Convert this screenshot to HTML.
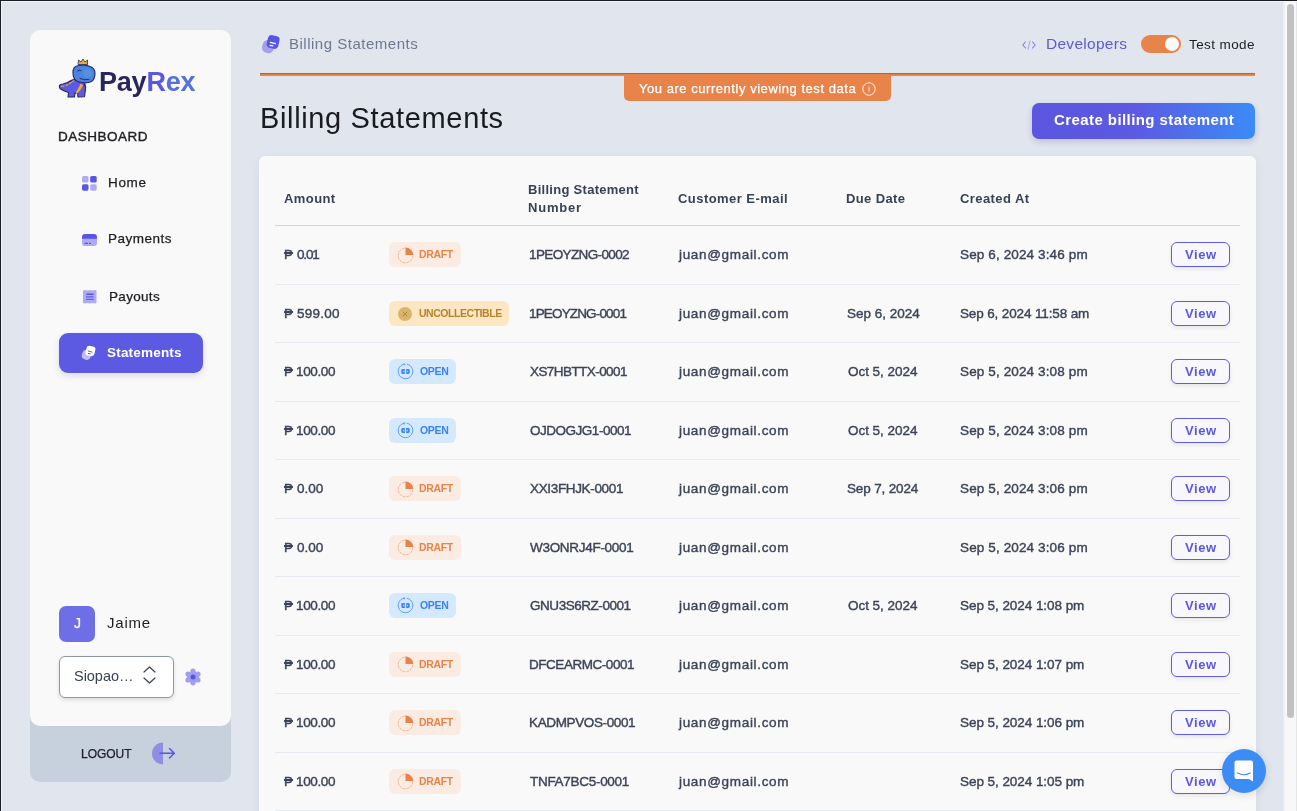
<!DOCTYPE html><html><head><meta charset="utf-8"><style>
*{box-sizing:border-box;margin:0;padding:0}
html,body{width:1297px;height:811px;overflow:hidden;background:#e1e5ee;font-family:'Liberation Sans',sans-serif}
.t{position:absolute;white-space:nowrap;line-height:1;will-change:transform}
.a{position:absolute}
.badge{position:absolute;height:25px;border-radius:6px}
.viewbtn{position:absolute;left:1171px;width:59px;height:25px;border:1px solid #5e5be4;border-radius:6px;background:#f8f8fc;box-shadow:0 2px 4px rgba(0,0,0,.08)}
.rowline{position:absolute;left:275px;width:965px;height:1px;background:#e6e9ef}
</style></head><body>
<div class="a" style="left:0;top:0;width:1297px;height:1px;background:#1b1e25"></div>
<div class="a" style="left:0;top:0;width:1px;height:811px;background:#1b1e25"></div>
<div class="a" style="left:1px;top:1px;width:1296px;height:1px;background:#eef2fa"></div>
<div class="a" style="left:1px;top:1px;width:1px;height:810px;background:#eef2fa"></div>
<div class="a" style="left:1283px;top:2px;width:14px;height:809px;background:linear-gradient(90deg,#e9e9e9 0,#f5f5f5 2px,#f8f8f8 3px,#f8f8f8 13px,#e6e6e6 13px)"></div>
<div class="a" style="left:1287px;top:4px;width:7px;height:714px;background:#c1c1c1;border-radius:4px"></div>
<div class="a" style="left:30px;top:700px;width:201px;height:82px;background:#c7d0dd;border-radius:10px"></div>
<div class="a" style="left:30px;top:30px;width:201px;height:696px;background:#f9f9f9;border-radius:10px"></div>
<div class="a" style="left:58.5px;top:333px;width:144px;height:40px;background:#5c59e2;border-radius:9px;box-shadow:0 3px 6px rgba(60,60,120,.15)"></div>
<div class="a" style="left:59px;top:606px;width:36px;height:36px;background:#6e6ee6;border-radius:7px"></div>
<div class="a" style="left:59px;top:656px;width:115px;height:42px;background:#fff;border:1px solid #8d97a8;border-radius:6px;box-shadow:0 2px 4px rgba(0,0,0,.12)"></div>
<div class="a" style="left:260px;top:73px;width:995px;height:1px;background:#6b7686"></div>
<div class="a" style="left:260px;top:74px;width:995px;height:2px;background:#e8834a"></div>
<div class="a" style="left:624px;top:76px;width:267px;height:25px;background:#e8834a;border-radius:0 0 5px 5px"></div>
<div class="a" style="left:1141px;top:35px;width:40px;height:18px;background:#e8834a;border-radius:9px"></div>
<div class="a" style="left:1165px;top:37px;width:14px;height:14px;background:#f9f9f9;border-radius:50%"></div>
<div class="a" style="left:1032px;top:103px;width:223px;height:36px;border-radius:7px;background:linear-gradient(90deg,#5b55e0 0%,#5d59e2 45%,#3b8bf6 100%);box-shadow:0 3px 6px rgba(60,60,120,.2)"></div>
<div class="a" style="left:259px;top:156px;width:997px;height:700px;background:#f9f9f9;border-radius:6px;box-shadow:0 3px 12px rgba(40,50,80,.06)"></div>
<div class="a" style="left:275px;top:225px;width:965px;height:1px;background:#cfd3da"></div>
<div class="badge" style="left:389px;top:242.00px;width:72px;background:#fbece3"><svg width="17" height="17" viewBox="0 0 17 17" style="position:absolute;left:7.5px;top:4.5px"><circle cx="8.5" cy="8.5" r="7.3" fill="none" stroke="#e8834a" stroke-width="0.9" stroke-dasharray="3 0.8" opacity=".55"/><path d="M8.5 0.4 A8.1 8.1 0 0 1 16.4 8.1 L8.5 8.1 Z" fill="#e8834a"/></svg></div>
<div class="viewbtn" style="top:242.00px"></div>
<div class="rowline" style="top:283.50px"></div>
<div class="badge" style="left:389px;top:300.50px;width:120px;background:#fce7c2"><svg width="16" height="16" viewBox="0 0 16 16" style="position:absolute;left:8px;top:5px"><circle cx="8" cy="8" r="7" fill="#d9b46c"/><path d="M5.8 5.8 L10.2 10.2 M10.2 5.8 L5.8 10.2" stroke="#b08536" stroke-width="1"/></svg></div>
<div class="viewbtn" style="top:300.50px"></div>
<div class="rowline" style="top:342.00px"></div>
<div class="badge" style="left:389px;top:359.00px;width:67px;background:#d5e9fc"><svg width="17" height="17" viewBox="0 0 17 17" style="position:absolute;left:7.5px;top:4.2px"><path d="M7.2 1.2 A7.3 7.3 0 1 0 9.8 1.2" fill="none" stroke="#3b82f6" stroke-width="0.9" opacity=".85"/><path d="M6.6 0.4 L8.2 1.3 L6.8 2.4" fill="none" stroke="#3b82f6" stroke-width=".8" opacity=".8"/><path d="M5.5 6 H7.9 V11 H5.5 Q4.3 11 4.3 9.6 V7.4 Q4.3 6 5.5 6Z M9.1 6 H11.5 Q12.7 6 12.7 7.4 V9.6 Q12.7 11 11.5 11 H9.1Z" fill="#3b82f6"/><rect x="6" y="7.6" width="1.4" height="1.8" fill="#d5e9fc" opacity=".7"/><rect x="9.6" y="7.6" width="1.4" height="1.8" fill="#d5e9fc" opacity=".7"/></svg></div>
<div class="viewbtn" style="top:359.00px"></div>
<div class="rowline" style="top:400.50px"></div>
<div class="badge" style="left:389px;top:417.50px;width:67px;background:#d5e9fc"><svg width="17" height="17" viewBox="0 0 17 17" style="position:absolute;left:7.5px;top:4.2px"><path d="M7.2 1.2 A7.3 7.3 0 1 0 9.8 1.2" fill="none" stroke="#3b82f6" stroke-width="0.9" opacity=".85"/><path d="M6.6 0.4 L8.2 1.3 L6.8 2.4" fill="none" stroke="#3b82f6" stroke-width=".8" opacity=".8"/><path d="M5.5 6 H7.9 V11 H5.5 Q4.3 11 4.3 9.6 V7.4 Q4.3 6 5.5 6Z M9.1 6 H11.5 Q12.7 6 12.7 7.4 V9.6 Q12.7 11 11.5 11 H9.1Z" fill="#3b82f6"/><rect x="6" y="7.6" width="1.4" height="1.8" fill="#d5e9fc" opacity=".7"/><rect x="9.6" y="7.6" width="1.4" height="1.8" fill="#d5e9fc" opacity=".7"/></svg></div>
<div class="viewbtn" style="top:417.50px"></div>
<div class="rowline" style="top:459.00px"></div>
<div class="badge" style="left:389px;top:476.00px;width:72px;background:#fbece3"><svg width="17" height="17" viewBox="0 0 17 17" style="position:absolute;left:7.5px;top:4.5px"><circle cx="8.5" cy="8.5" r="7.3" fill="none" stroke="#e8834a" stroke-width="0.9" stroke-dasharray="3 0.8" opacity=".55"/><path d="M8.5 0.4 A8.1 8.1 0 0 1 16.4 8.1 L8.5 8.1 Z" fill="#e8834a"/></svg></div>
<div class="viewbtn" style="top:476.00px"></div>
<div class="rowline" style="top:517.50px"></div>
<div class="badge" style="left:389px;top:534.50px;width:72px;background:#fbece3"><svg width="17" height="17" viewBox="0 0 17 17" style="position:absolute;left:7.5px;top:4.5px"><circle cx="8.5" cy="8.5" r="7.3" fill="none" stroke="#e8834a" stroke-width="0.9" stroke-dasharray="3 0.8" opacity=".55"/><path d="M8.5 0.4 A8.1 8.1 0 0 1 16.4 8.1 L8.5 8.1 Z" fill="#e8834a"/></svg></div>
<div class="viewbtn" style="top:534.50px"></div>
<div class="rowline" style="top:576.00px"></div>
<div class="badge" style="left:389px;top:593.00px;width:67px;background:#d5e9fc"><svg width="17" height="17" viewBox="0 0 17 17" style="position:absolute;left:7.5px;top:4.2px"><path d="M7.2 1.2 A7.3 7.3 0 1 0 9.8 1.2" fill="none" stroke="#3b82f6" stroke-width="0.9" opacity=".85"/><path d="M6.6 0.4 L8.2 1.3 L6.8 2.4" fill="none" stroke="#3b82f6" stroke-width=".8" opacity=".8"/><path d="M5.5 6 H7.9 V11 H5.5 Q4.3 11 4.3 9.6 V7.4 Q4.3 6 5.5 6Z M9.1 6 H11.5 Q12.7 6 12.7 7.4 V9.6 Q12.7 11 11.5 11 H9.1Z" fill="#3b82f6"/><rect x="6" y="7.6" width="1.4" height="1.8" fill="#d5e9fc" opacity=".7"/><rect x="9.6" y="7.6" width="1.4" height="1.8" fill="#d5e9fc" opacity=".7"/></svg></div>
<div class="viewbtn" style="top:593.00px"></div>
<div class="rowline" style="top:634.50px"></div>
<div class="badge" style="left:389px;top:651.50px;width:72px;background:#fbece3"><svg width="17" height="17" viewBox="0 0 17 17" style="position:absolute;left:7.5px;top:4.5px"><circle cx="8.5" cy="8.5" r="7.3" fill="none" stroke="#e8834a" stroke-width="0.9" stroke-dasharray="3 0.8" opacity=".55"/><path d="M8.5 0.4 A8.1 8.1 0 0 1 16.4 8.1 L8.5 8.1 Z" fill="#e8834a"/></svg></div>
<div class="viewbtn" style="top:651.50px"></div>
<div class="rowline" style="top:693.00px"></div>
<div class="badge" style="left:389px;top:710.00px;width:72px;background:#fbece3"><svg width="17" height="17" viewBox="0 0 17 17" style="position:absolute;left:7.5px;top:4.5px"><circle cx="8.5" cy="8.5" r="7.3" fill="none" stroke="#e8834a" stroke-width="0.9" stroke-dasharray="3 0.8" opacity=".55"/><path d="M8.5 0.4 A8.1 8.1 0 0 1 16.4 8.1 L8.5 8.1 Z" fill="#e8834a"/></svg></div>
<div class="viewbtn" style="top:710.00px"></div>
<div class="rowline" style="top:751.50px"></div>
<div class="badge" style="left:389px;top:768.50px;width:72px;background:#fbece3"><svg width="17" height="17" viewBox="0 0 17 17" style="position:absolute;left:7.5px;top:4.5px"><circle cx="8.5" cy="8.5" r="7.3" fill="none" stroke="#e8834a" stroke-width="0.9" stroke-dasharray="3 0.8" opacity=".55"/><path d="M8.5 0.4 A8.1 8.1 0 0 1 16.4 8.1 L8.5 8.1 Z" fill="#e8834a"/></svg></div>
<div class="viewbtn" style="top:768.50px"></div>
<div class="rowline" style="top:810.00px"></div>
<svg class="a" style="left:82px;top:176px" width="15" height="15" viewBox="0 0 15 15"><rect x="0" y="0" width="6.5" height="6.5" rx="1.6" fill="#aeabf2"/><rect x="8.2" y="0" width="6.5" height="6.5" rx="1.6" fill="#5855e2"/><rect x="0" y="8.2" width="6.5" height="6.5" rx="1.6" fill="#5855e2"/><rect x="8.2" y="8.2" width="6.5" height="6.5" rx="1.6" fill="#aeabf2"/></svg>
<svg class="a" style="left:82px;top:234px" width="15" height="12" viewBox="0 0 15 12"><path d="M0 4 H15 V9 Q15 12 12 12 H3 Q0 12 0 9Z" fill="#aeabf2"/><path d="M3 0 H12 Q15 0 15 3 V4.8 H0 V3 Q0 0 3 0Z" fill="#5855e2"/><rect x="2.5" y="8.8" width="3.5" height="1.2" rx=".6" fill="#5855e2"/><rect x="7" y="8.8" width="2" height="1.2" rx=".6" fill="#5855e2"/></svg>
<svg class="a" style="left:82.5px;top:290px" width="14" height="13.5" viewBox="0 0 14 13.5"><path d="M0 0.5 L2 0 L4 0.6 L7 0 L10 0.6 L12 0 L13.5 0.5 V13 L12 13.5 L10 13 L7 13.5 L4 13 L2 13.5 L0 13Z" fill="#aeabf2"/><rect x="3.2" y="3.6" width="7.5" height="1.3" rx=".6" fill="#5855e2"/><rect x="3" y="6.2" width="7.8" height="1.4" rx=".6" fill="#6461e4"/><rect x="3" y="8.8" width="7.8" height="1.3" rx=".6" fill="#6461e4"/></svg>
<svg class="a" style="left:78.5px;top:342.5px" width="20" height="20" viewBox="1 1 22 22"><rect x="4.3" y="8.6" width="10" height="10.8" rx="4.5" transform="rotate(18 9.3 14)" fill="#c0bdf6"/><rect x="8.6" y="4.4" width="10" height="10.8" rx="3.4" transform="rotate(14 13.6 9.8)" fill="#ffffff"/><path d="M11.4 9.9 L15.5 11 M11.2 12.4 L13.4 12.9" stroke="#5c59e2" stroke-width="1.1" stroke-linecap="round"/></svg>
<svg class="a" style="left:259px;top:32px" width="24" height="24" viewBox="0 0 24 24"><rect x="3.3" y="8.2" width="11.8" height="12.8" rx="5" transform="rotate(18 9.2 14.6)" fill="#a3a0ee"/><rect x="8.2" y="3.6" width="11.8" height="12.8" rx="3.6" transform="rotate(14 14.1 10)" fill="#5855e2"/><path d="M11.4 10.3 L16.4 11.6 M11.1 13.3 L13.8 13.9" stroke="#fff" stroke-width="1.3" stroke-linecap="round"/></svg>
<svg class="a" style="left:1022px;top:40px" width="14" height="10" viewBox="0 0 14 10"><path d="M3.5 2 L0.8 5 L3.5 8 M10.5 2 L13.2 5 L10.5 8" stroke="#7b78e6" stroke-width="1.1" fill="none" stroke-linecap="round" stroke-linejoin="round"/><path d="M8 1 L6 9.5" stroke="#aeabf2" stroke-width="1.1" stroke-linecap="round"/></svg>
<svg class="a" style="left:862px;top:81.5px" width="14" height="14" viewBox="0 0 14 14"><circle cx="7" cy="7" r="6.2" fill="none" stroke="#fff" stroke-width=".9"/><path d="M7 4.6 V9.6" stroke="#fff" stroke-width=".8"/></svg>
<svg class="a" style="left:143px;top:666px" width="13" height="18" viewBox="0 0 13 18"><path d="M1 6 L6.5 1 L12 6 M1 12 L6.5 17 L12 12" stroke="#3b4252" stroke-width="1.2" fill="none" stroke-linecap="round" stroke-linejoin="round"/></svg>
<svg class="a" style="left:183.5px;top:667.5px" width="18" height="18" viewBox="0 0 18 18"><g fill="#a19ef1"><circle cx="9" cy="9" r="6"/><circle cx="9" cy="3.2" r="2.6"/><circle cx="9" cy="14.8" r="2.6"/><circle cx="4" cy="6.1" r="2.6"/><circle cx="14" cy="6.1" r="2.6"/><circle cx="4" cy="11.9" r="2.6"/><circle cx="14" cy="11.9" r="2.6"/></g><circle cx="9" cy="9" r="2.5" fill="#5855e2"/></svg>
<svg class="a" style="left:151px;top:742px" width="25" height="23" viewBox="0 0 25 23"><path d="M12 0.5 A11 11 0 0 0 12 22.5 Z" fill="#8f8ee3"/><path d="M9 11.3 H23 M18.5 6.5 L23.3 11.3 L18.5 16" stroke="#5855e2" stroke-width="1.5" fill="none" stroke-linecap="round" stroke-linejoin="round"/></svg>
<div class="a" style="left:1222px;top:749px;width:44px;height:44px;border-radius:50%;background:#3c8cf5;box-shadow:0 2px 8px rgba(0,0,0,.12)"></div>
<svg class="a" style="left:1234px;top:760px" width="20" height="22" viewBox="0 0 20 22"><path d="M2.5 0.5 H17 Q19 0.5 19 2.5 V21.5 L15 19 H2.5 Q0.5 19 0.5 17 V2.5 Q0.5 0.5 2.5 0.5Z" fill="#fff"/><path d="M3.5 13 Q10 16.5 16 13" stroke="#3c8cf5" stroke-width="1.2" fill="none" stroke-linecap="round"/></svg>
<svg class="a" style="left:54px;top:54px" width="50" height="50" viewBox="0 0 50 50">
<path d="M5.5 31.5 Q6 30 9 30 Q14 29 17 26.5 Q20 25 24 26 L30 29 Q32 31 31.5 35 L30.5 42.8 L24 43 L23.5 39 Q22 39.5 21 39 L20.5 43 L14 43 L14.5 38.5 Q9 37 6 34.5 Q5 33 5.5 31.5Z" fill="#5b5ae0" stroke="#26246a" stroke-width="1.1" stroke-linejoin="round"/>
<path d="M7.5 32.3 L10 32 M12 31.2 L14 30.6 M15.5 29.6 L17.3 28.5 M18.5 27.5 L20 26.8" stroke="#e8a640" stroke-width="1.2" stroke-linecap="round"/>
<path d="M26.5 30 Q29 29.5 29 31.5 Q27 36 23 40 Q21.5 39.5 22 38 Q24.5 34 26.5 30Z" fill="#f0a830"/>
<path d="M19 19 Q18.5 12 25 11.5 Q31 10.5 36 12.5 Q41 14 41 19.5 Q41 25 37.5 27.5 Q33 29.5 28 28.5 Q22 28 20 24 Q19 22 19 19Z" fill="#4a84dc" stroke="#26246a" stroke-width="1.1"/>
<path d="M30 16 Q34 14.5 37 16.5 Q38 19 37.5 22 Q34 24 30.5 23 Q28.5 20 30 16Z" fill="#5a95e4" opacity=".7"/>
<path d="M23.5 17 Q25 15.5 27 16.5 M26 24.5 Q30 26.5 35 25.5 M30 31 L31.5 33" stroke="#26246a" stroke-width=".9" fill="none" stroke-linecap="round"/>
<path d="M24 10.5 L24.5 6 L27 8 L29 5 L31 8 L33.5 6 L33.5 10.5 Z" fill="#f0a830" stroke="#26246a" stroke-width=".8" stroke-linejoin="round"/>
</svg>
<div class="t" style="left:99px;top:69px;font-size:27px;font-weight:700;letter-spacing:-0.2px;line-height:1"><span style="color:#27265e">Pay</span><span style="color:#5a58e2">R</span><span style="color:#5470dc">ex</span></div>
<div class="t" style="left:58.00px;top:130.17px;font-size:13.5px;font-weight:400;-webkit-text-stroke:0.4px currentColor;color:#1d1e22;letter-spacing:0.500px;">DASHBOARD</div>
<div class="t" style="left:108.40px;top:175.57px;font-size:13.5px;font-weight:400;-webkit-text-stroke:0.25px currentColor;color:#1d1e22;letter-spacing:0.667px;">Home</div>
<div class="t" style="left:108.40px;top:232.37px;font-size:13.5px;font-weight:400;-webkit-text-stroke:0.25px currentColor;color:#1d1e22;letter-spacing:0.514px;">Payments</div>
<div class="t" style="left:108.60px;top:289.57px;font-size:13.5px;font-weight:400;-webkit-text-stroke:0.25px currentColor;color:#1d1e22;letter-spacing:0.317px;">Payouts</div>
<div class="t" style="left:106.70px;top:345.77px;font-size:13.5px;font-weight:700;color:#ffffff;letter-spacing:0.200px;">Statements</div>
<div class="t" style="left:73.50px;top:615.95px;font-size:14px;font-weight:400;-webkit-text-stroke:0.25px currentColor;color:#ffffff;letter-spacing:0.000px;">J</div>
<div class="t" style="left:106.80px;top:615.10px;font-size:15px;font-weight:400;color:#1d1e22;letter-spacing:0.800px;">Jaime</div>
<div class="t" style="left:73.70px;top:668.73px;font-size:14.5px;font-weight:400;color:#374151;letter-spacing:-0.033px;">Siopao…</div>
<div class="t" style="left:81.00px;top:748.04px;font-size:12px;font-weight:400;-webkit-text-stroke:0.25px currentColor;color:#1d1e22;letter-spacing:-0.040px;">LOGOUT</div>
<div class="t" style="left:288.70px;top:36.30px;font-size:15px;font-weight:400;color:#6b7a90;letter-spacing:0.506px;">Billing Statements</div>
<div class="t" style="left:1045.90px;top:35.88px;font-size:15.5px;font-weight:400;color:#5b5bd6;letter-spacing:0.278px;">Developers</div>
<div class="t" style="left:1189.00px;top:37.57px;font-size:13.5px;font-weight:400;color:#1d1e22;letter-spacing:0.400px;">Test mode</div>
<div class="t" style="left:638.60px;top:81.80px;font-size:13px;font-weight:400;-webkit-text-stroke:0.25px currentColor;color:#ffffff;letter-spacing:0.541px;">You are currently viewing test data</div>
<div class="t" style="left:259.50px;top:104.45px;font-size:29px;font-weight:400;color:#1a1b1f;letter-spacing:0.647px;">Billing Statements</div>
<div class="t" style="left:1053.60px;top:112.30px;font-size:15px;font-weight:700;color:#ffffff;letter-spacing:0.422px;">Create billing statement</div>
<div class="t" style="left:284.10px;top:191.80px;font-size:13px;font-weight:700;color:#374254;letter-spacing:0.420px;">Amount</div>
<div class="t" style="left:527.60px;top:183.00px;font-size:13px;font-weight:700;color:#374254;letter-spacing:0.281px;">Billing Statement</div>
<div class="t" style="left:527.60px;top:200.70px;font-size:13px;font-weight:700;color:#374254;letter-spacing:0.780px;">Number</div>
<div class="t" style="left:678.10px;top:192.00px;font-size:13px;font-weight:700;color:#374254;letter-spacing:0.450px;">Customer E-mail</div>
<div class="t" style="left:846.10px;top:192.20px;font-size:13px;font-weight:700;color:#374254;letter-spacing:0.386px;">Due Date</div>
<div class="t" style="left:959.80px;top:192.20px;font-size:13px;font-weight:700;color:#374254;letter-spacing:0.422px;">Created At</div>
<div class="t" style="left:284.30px;top:247.57px;font-size:13.5px;font-weight:400;-webkit-text-stroke:0.4px currentColor;color:#3b4557;letter-spacing:0.000px;">₱</div>
<div class="t" style="left:296.80px;top:247.57px;font-size:13.5px;font-weight:400;-webkit-text-stroke:0.4px currentColor;color:#3b4557;letter-spacing:-1.167px;">0.01</div>
<div class="t" style="left:529.20px;top:247.57px;font-size:13.5px;font-weight:400;-webkit-text-stroke:0.4px currentColor;color:#3b4557;letter-spacing:-0.625px;">1PEOYZNG-0002</div>
<div class="t" style="left:679.00px;top:247.57px;font-size:13.5px;font-weight:400;-webkit-text-stroke:0.4px currentColor;color:#3b4557;letter-spacing:0.677px;">juan@gmail.com</div>
<div class="t" style="left:960.00px;top:247.57px;font-size:13.5px;font-weight:400;-webkit-text-stroke:0.4px currentColor;color:#3b4557;letter-spacing:0.128px;">Sep 6, 2024 3:46 pm</div>
<div class="t" style="left:1185.00px;top:248.00px;font-size:13px;font-weight:700;color:#5b57e0;letter-spacing:0.600px;">View</div>
<div class="t" style="left:284.30px;top:306.57px;font-size:13.5px;font-weight:400;-webkit-text-stroke:0.4px currentColor;color:#3b4557;letter-spacing:0.000px;">₱</div>
<div class="t" style="left:296.80px;top:306.57px;font-size:13.5px;font-weight:400;-webkit-text-stroke:0.4px currentColor;color:#3b4557;letter-spacing:0.240px;">599.00</div>
<div class="t" style="left:529.20px;top:306.57px;font-size:13.5px;font-weight:400;-webkit-text-stroke:0.4px currentColor;color:#3b4557;letter-spacing:-0.842px;">1PEOYZNG-0001</div>
<div class="t" style="left:679.00px;top:306.57px;font-size:13.5px;font-weight:400;-webkit-text-stroke:0.4px currentColor;color:#3b4557;letter-spacing:0.677px;">juan@gmail.com</div>
<div class="t" style="left:847.20px;top:306.57px;font-size:13.5px;font-weight:400;-webkit-text-stroke:0.4px currentColor;color:#3b4557;letter-spacing:0.000px;">Sep 6, 2024</div>
<div class="t" style="left:960.00px;top:306.57px;font-size:13.5px;font-weight:400;-webkit-text-stroke:0.4px currentColor;color:#3b4557;letter-spacing:-0.132px;">Sep 6, 2024 11:58 am</div>
<div class="t" style="left:1185.00px;top:307.00px;font-size:13px;font-weight:700;color:#5b57e0;letter-spacing:0.600px;">View</div>
<div class="t" style="left:284.30px;top:364.57px;font-size:13.5px;font-weight:400;-webkit-text-stroke:0.4px currentColor;color:#3b4557;letter-spacing:0.000px;">₱</div>
<div class="t" style="left:295.80px;top:364.57px;font-size:13.5px;font-weight:400;-webkit-text-stroke:0.4px currentColor;color:#3b4557;letter-spacing:-0.360px;">100.00</div>
<div class="t" style="left:530.20px;top:364.57px;font-size:13.5px;font-weight:400;-webkit-text-stroke:0.4px currentColor;color:#3b4557;letter-spacing:-0.567px;">XS7HBTTX-0001</div>
<div class="t" style="left:679.00px;top:364.57px;font-size:13.5px;font-weight:400;-webkit-text-stroke:0.4px currentColor;color:#3b4557;letter-spacing:0.677px;">juan@gmail.com</div>
<div class="t" style="left:848.20px;top:364.57px;font-size:13.5px;font-weight:400;-webkit-text-stroke:0.4px currentColor;color:#3b4557;letter-spacing:-0.040px;">Oct 5, 2024</div>
<div class="t" style="left:960.00px;top:364.57px;font-size:13.5px;font-weight:400;-webkit-text-stroke:0.4px currentColor;color:#3b4557;letter-spacing:0.128px;">Sep 5, 2024 3:08 pm</div>
<div class="t" style="left:1185.00px;top:365.00px;font-size:13px;font-weight:700;color:#5b57e0;letter-spacing:0.600px;">View</div>
<div class="t" style="left:284.30px;top:423.57px;font-size:13.5px;font-weight:400;-webkit-text-stroke:0.4px currentColor;color:#3b4557;letter-spacing:0.000px;">₱</div>
<div class="t" style="left:295.80px;top:423.57px;font-size:13.5px;font-weight:400;-webkit-text-stroke:0.4px currentColor;color:#3b4557;letter-spacing:-0.360px;">100.00</div>
<div class="t" style="left:530.20px;top:423.57px;font-size:13.5px;font-weight:400;-webkit-text-stroke:0.4px currentColor;color:#3b4557;letter-spacing:-0.483px;">OJDOGJG1-0001</div>
<div class="t" style="left:679.00px;top:423.57px;font-size:13.5px;font-weight:400;-webkit-text-stroke:0.4px currentColor;color:#3b4557;letter-spacing:0.677px;">juan@gmail.com</div>
<div class="t" style="left:848.20px;top:423.57px;font-size:13.5px;font-weight:400;-webkit-text-stroke:0.4px currentColor;color:#3b4557;letter-spacing:-0.040px;">Oct 5, 2024</div>
<div class="t" style="left:960.00px;top:423.57px;font-size:13.5px;font-weight:400;-webkit-text-stroke:0.4px currentColor;color:#3b4557;letter-spacing:0.128px;">Sep 5, 2024 3:08 pm</div>
<div class="t" style="left:1185.00px;top:424.00px;font-size:13px;font-weight:700;color:#5b57e0;letter-spacing:0.600px;">View</div>
<div class="t" style="left:284.30px;top:481.57px;font-size:13.5px;font-weight:400;-webkit-text-stroke:0.4px currentColor;color:#3b4557;letter-spacing:0.000px;">₱</div>
<div class="t" style="left:296.80px;top:481.57px;font-size:13.5px;font-weight:400;-webkit-text-stroke:0.4px currentColor;color:#3b4557;letter-spacing:0.000px;">0.00</div>
<div class="t" style="left:530.20px;top:481.57px;font-size:13.5px;font-weight:400;-webkit-text-stroke:0.4px currentColor;color:#3b4557;letter-spacing:-0.342px;">XXI3FHJK-0001</div>
<div class="t" style="left:679.00px;top:481.57px;font-size:13.5px;font-weight:400;-webkit-text-stroke:0.4px currentColor;color:#3b4557;letter-spacing:0.677px;">juan@gmail.com</div>
<div class="t" style="left:847.20px;top:481.57px;font-size:13.5px;font-weight:400;-webkit-text-stroke:0.4px currentColor;color:#3b4557;letter-spacing:-0.150px;">Sep 7, 2024</div>
<div class="t" style="left:960.00px;top:481.57px;font-size:13.5px;font-weight:400;-webkit-text-stroke:0.4px currentColor;color:#3b4557;letter-spacing:0.128px;">Sep 5, 2024 3:06 pm</div>
<div class="t" style="left:1185.00px;top:482.00px;font-size:13px;font-weight:700;color:#5b57e0;letter-spacing:0.600px;">View</div>
<div class="t" style="left:284.30px;top:540.57px;font-size:13.5px;font-weight:400;-webkit-text-stroke:0.4px currentColor;color:#3b4557;letter-spacing:0.000px;">₱</div>
<div class="t" style="left:296.80px;top:540.57px;font-size:13.5px;font-weight:400;-webkit-text-stroke:0.4px currentColor;color:#3b4557;letter-spacing:0.000px;">0.00</div>
<div class="t" style="left:530.20px;top:540.57px;font-size:13.5px;font-weight:400;-webkit-text-stroke:0.4px currentColor;color:#3b4557;letter-spacing:-0.292px;">W3ONRJ4F-0001</div>
<div class="t" style="left:679.00px;top:540.57px;font-size:13.5px;font-weight:400;-webkit-text-stroke:0.4px currentColor;color:#3b4557;letter-spacing:0.677px;">juan@gmail.com</div>
<div class="t" style="left:960.00px;top:540.57px;font-size:13.5px;font-weight:400;-webkit-text-stroke:0.4px currentColor;color:#3b4557;letter-spacing:0.128px;">Sep 5, 2024 3:06 pm</div>
<div class="t" style="left:1185.00px;top:541.00px;font-size:13px;font-weight:700;color:#5b57e0;letter-spacing:0.600px;">View</div>
<div class="t" style="left:284.30px;top:598.57px;font-size:13.5px;font-weight:400;-webkit-text-stroke:0.4px currentColor;color:#3b4557;letter-spacing:0.000px;">₱</div>
<div class="t" style="left:295.80px;top:598.57px;font-size:13.5px;font-weight:400;-webkit-text-stroke:0.4px currentColor;color:#3b4557;letter-spacing:-0.360px;">100.00</div>
<div class="t" style="left:530.20px;top:598.57px;font-size:13.5px;font-weight:400;-webkit-text-stroke:0.4px currentColor;color:#3b4557;letter-spacing:-0.458px;">GNU3S6RZ-0001</div>
<div class="t" style="left:679.00px;top:598.57px;font-size:13.5px;font-weight:400;-webkit-text-stroke:0.4px currentColor;color:#3b4557;letter-spacing:0.677px;">juan@gmail.com</div>
<div class="t" style="left:848.20px;top:598.57px;font-size:13.5px;font-weight:400;-webkit-text-stroke:0.4px currentColor;color:#3b4557;letter-spacing:-0.040px;">Oct 5, 2024</div>
<div class="t" style="left:960.00px;top:598.57px;font-size:13.5px;font-weight:400;-webkit-text-stroke:0.4px currentColor;color:#3b4557;letter-spacing:-0.056px;">Sep 5, 2024 1:08 pm</div>
<div class="t" style="left:1185.00px;top:599.00px;font-size:13px;font-weight:700;color:#5b57e0;letter-spacing:0.600px;">View</div>
<div class="t" style="left:284.30px;top:657.57px;font-size:13.5px;font-weight:400;-webkit-text-stroke:0.4px currentColor;color:#3b4557;letter-spacing:0.000px;">₱</div>
<div class="t" style="left:295.80px;top:657.57px;font-size:13.5px;font-weight:400;-webkit-text-stroke:0.4px currentColor;color:#3b4557;letter-spacing:-0.360px;">100.00</div>
<div class="t" style="left:529.20px;top:657.57px;font-size:13.5px;font-weight:400;-webkit-text-stroke:0.4px currentColor;color:#3b4557;letter-spacing:-0.458px;">DFCEARMC-0001</div>
<div class="t" style="left:679.00px;top:657.57px;font-size:13.5px;font-weight:400;-webkit-text-stroke:0.4px currentColor;color:#3b4557;letter-spacing:0.677px;">juan@gmail.com</div>
<div class="t" style="left:960.00px;top:657.57px;font-size:13.5px;font-weight:400;-webkit-text-stroke:0.4px currentColor;color:#3b4557;letter-spacing:-0.056px;">Sep 5, 2024 1:07 pm</div>
<div class="t" style="left:1185.00px;top:658.00px;font-size:13px;font-weight:700;color:#5b57e0;letter-spacing:0.600px;">View</div>
<div class="t" style="left:284.30px;top:715.57px;font-size:13.5px;font-weight:400;-webkit-text-stroke:0.4px currentColor;color:#3b4557;letter-spacing:0.000px;">₱</div>
<div class="t" style="left:295.80px;top:715.57px;font-size:13.5px;font-weight:400;-webkit-text-stroke:0.4px currentColor;color:#3b4557;letter-spacing:-0.360px;">100.00</div>
<div class="t" style="left:529.20px;top:715.57px;font-size:13.5px;font-weight:400;-webkit-text-stroke:0.4px currentColor;color:#3b4557;letter-spacing:-0.375px;">KADMPVOS-0001</div>
<div class="t" style="left:679.00px;top:715.57px;font-size:13.5px;font-weight:400;-webkit-text-stroke:0.4px currentColor;color:#3b4557;letter-spacing:0.677px;">juan@gmail.com</div>
<div class="t" style="left:960.00px;top:715.57px;font-size:13.5px;font-weight:400;-webkit-text-stroke:0.4px currentColor;color:#3b4557;letter-spacing:-0.056px;">Sep 5, 2024 1:06 pm</div>
<div class="t" style="left:1185.00px;top:716.00px;font-size:13px;font-weight:700;color:#5b57e0;letter-spacing:0.600px;">View</div>
<div class="t" style="left:284.30px;top:774.57px;font-size:13.5px;font-weight:400;-webkit-text-stroke:0.4px currentColor;color:#3b4557;letter-spacing:0.000px;">₱</div>
<div class="t" style="left:295.80px;top:774.57px;font-size:13.5px;font-weight:400;-webkit-text-stroke:0.4px currentColor;color:#3b4557;letter-spacing:-0.360px;">100.00</div>
<div class="t" style="left:530.20px;top:774.57px;font-size:13.5px;font-weight:400;-webkit-text-stroke:0.4px currentColor;color:#3b4557;letter-spacing:-0.292px;">TNFA7BC5-0001</div>
<div class="t" style="left:679.00px;top:774.57px;font-size:13.5px;font-weight:400;-webkit-text-stroke:0.4px currentColor;color:#3b4557;letter-spacing:0.677px;">juan@gmail.com</div>
<div class="t" style="left:960.00px;top:774.57px;font-size:13.5px;font-weight:400;-webkit-text-stroke:0.4px currentColor;color:#3b4557;letter-spacing:-0.056px;">Sep 5, 2024 1:05 pm</div>
<div class="t" style="left:1185.00px;top:775.00px;font-size:13px;font-weight:700;color:#5b57e0;letter-spacing:0.600px;">View</div>
<div class="t" style="left:418.80px;top:249.11px;font-size:10.5px;font-weight:700;color:#e8834a;letter-spacing:-0.350px;">DRAFT</div>
<div class="t" style="left:418.60px;top:307.61px;font-size:10.5px;font-weight:700;color:#b5832a;letter-spacing:-0.458px;">UNCOLLECTIBLE</div>
<div class="t" style="left:419.80px;top:366.11px;font-size:10.5px;font-weight:700;color:#3b82f6;letter-spacing:-0.333px;">OPEN</div>
<div class="t" style="left:419.80px;top:424.61px;font-size:10.5px;font-weight:700;color:#3b82f6;letter-spacing:-0.333px;">OPEN</div>
<div class="t" style="left:418.80px;top:483.11px;font-size:10.5px;font-weight:700;color:#e8834a;letter-spacing:-0.350px;">DRAFT</div>
<div class="t" style="left:418.80px;top:541.61px;font-size:10.5px;font-weight:700;color:#e8834a;letter-spacing:-0.350px;">DRAFT</div>
<div class="t" style="left:419.80px;top:600.11px;font-size:10.5px;font-weight:700;color:#3b82f6;letter-spacing:-0.333px;">OPEN</div>
<div class="t" style="left:418.80px;top:658.61px;font-size:10.5px;font-weight:700;color:#e8834a;letter-spacing:-0.350px;">DRAFT</div>
<div class="t" style="left:418.80px;top:717.11px;font-size:10.5px;font-weight:700;color:#e8834a;letter-spacing:-0.350px;">DRAFT</div>
<div class="t" style="left:418.80px;top:775.61px;font-size:10.5px;font-weight:700;color:#e8834a;letter-spacing:-0.350px;">DRAFT</div>
</body></html>
